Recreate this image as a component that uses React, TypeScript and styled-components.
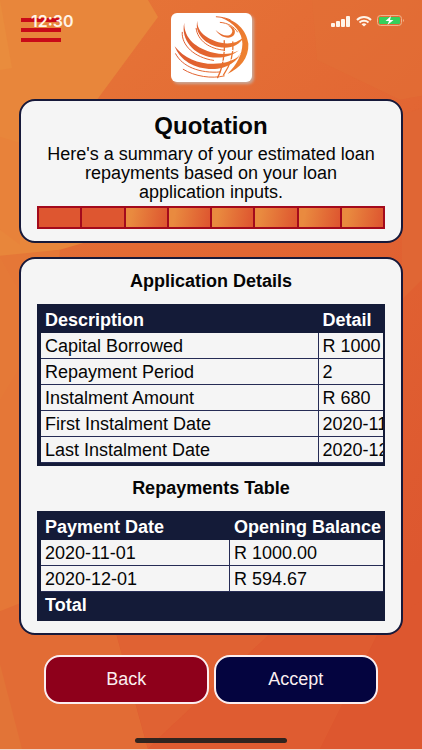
import React from "react";
import styled, { createGlobalStyle } from "styled-components";

const GlobalStyle = createGlobalStyle`
  * { box-sizing: border-box; }
  body {
    margin: 0;
    background: #e06534;
    font-family: "Liberation Sans", Arial, sans-serif;
    color: #050505;
  }
`;

const Screen = styled.div`
  position: relative;
  isolation: isolate;
  display: flex;
  flex-direction: column;
  min-height: 100vh;
  overflow: hidden;
  border-bottom: 1px solid #f3d5c8;
`;

const Backdrop = styled.svg`
  position: absolute;
  inset: 0;
  z-index: -1;
  width: 100%;
  height: 100%;
`;

const StatusBar = styled.div`
  position: absolute;
  top: 12px;
  left: 31px;
  right: 17px;
  display: flex;
  align-items: center;
  justify-content: space-between;
  height: 18px;
  color: #fff4e8;
  pointer-events: none;
`;

const Clock = styled.time`
  font-family: Inter, sans-serif;
  font-size: 16px;
  line-height: 18px;
  font-weight: 600;
`;

const StatusIcons = styled.div`
  display: flex;
  align-items: center;
  gap: 5px;
  svg { display: block; }
`;

const Header = styled.header`
  display: grid;
  grid-template-columns: 1fr auto 1fr;
  align-items: start;
  padding: 13px 20px 0;
`;

const MenuButton = styled.button`
  display: flex;
  flex-direction: column;
  gap: 6px;
  width: 42px;
  padding: 5px 1px;
  border: 0;
  background: none;
  cursor: pointer;
`;

const MenuLine = styled.span`
  height: 4px;
  width: 100%;
  background: #c90a18;
`;

const Logo = styled.div`
  width: 81px;
  height: 69px;
  border-radius: 6px;
  background: #fff;
  box-shadow: 2px 2px 3px #c9a99a;
  svg { display: block; width: 100%; height: 100%; }
`;

const Main = styled.main`
  display: flex;
  flex-direction: column;
  gap: 14px;
  padding: 17px 19px 0;
`;

const Card = styled.section`
  padding: 12px 16px;
  border: 2px solid #17193a;
  border-radius: 16px;
  background: #f5f5f5;
  text-align: center;
`;

const Title = styled.h1`
  margin: 0 0 6px;
  font-size: 24px;
  line-height: 26px;
`;

const Summary = styled.p`
  margin: 0 0 4px;
  font-size: 18px;
  line-height: 19px;
`;

const Steps = styled.ol`
  display: grid;
  grid-template-columns: repeat(8, 1fr);
  margin: 0;
  padding: 0 0 0 1px;
  list-style: none;
  border: 1px solid #a30a1c;
  border-right: 0;
  background: #a30a1c;
`;

const Step = styled.li<{ $done: boolean }>`
  height: 21px;
  border: solid #a30a1c;
  border-width: 1px 2px 1px 0;
  background: ${(p) => (p.$done ? "#de5630" : "linear-gradient(100deg, #e98a3f 15%, #de5730 95%)")};
`;

const SectionTitle = styled.h2`
  margin: 0;
  font-size: 18px;
  line-height: 20px;
`;

const TableFrame = styled.div`
  margin: 13px 0 12px;
  overflow-x: auto;
  scrollbar-width: none;
  border: 2px solid #141b38;
  &:last-child { margin-bottom: 0; }
`;

const Table = styled.table<{ $width: string; $first: string }>`
  width: ${(p) => p.$width};
  table-layout: fixed;
  border-collapse: separate;
  border-spacing: 0;
  border: solid #141b38;
  border-width: 1px 2px;
  font-size: 18px;
  line-height: 20px;
  text-align: left;
  white-space: nowrap;

  th:first-child, td:first-child { width: ${(p) => p.$first}; }
`;

const HeadCell = styled.th`
  height: 26px;
  padding: 0 4px;
  background: #141b38;
  color: #fff;
  & + & { border-left: 1px solid #141b38; }
`;

const Cell = styled.td`
  height: 26px;
  padding: 0 4px;
  border-bottom: 1px solid #262c55;
  & + & { border-left: 1px solid #262c55; }
`;

const Actions = styled.div`
  display: grid;
  grid-template-columns: 1fr 1fr;
  gap: 5px;
  padding: 20px 44px 0;
`;

const ActionButton = styled.button<{ $tone: string }>`
  height: 49px;
  border: 2px solid #fbeef0;
  border-radius: 16px;
  background: ${(p) => p.$tone};
  color: #fbeef0;
  font-family: inherit;
  font-size: 18px;
  cursor: pointer;
`;

const HomeIndicator = styled.div`
  width: 36%;
  height: 5px;
  margin: auto auto 6px;
  border-radius: 3px;
  background: #30241f;
`;

const details = [
  ["Capital Borrowed", "R 1000"],
  ["Repayment Period", "2"],
  ["Instalment Amount", "R 680"],
  ["First Instalment Date", "2020-11-01"],
  ["Last Instalment Date", "2020-12-01"],
];

const repayments = [
  ["2020-11-01", "R 1000.00"],
  ["2020-12-01", "R 594.67"],
];

function Facets() {
  return (
    <Backdrop viewBox="0 0 422 750" preserveAspectRatio="none" aria-hidden="true">
      <defs>
        <linearGradient id="base" x1="0" y1="0" x2="0.5" y2="1">
          <stop offset="0" stopColor="#e77838" />
          <stop offset="0.5" stopColor="#e26633" />
          <stop offset="1" stopColor="#dd572f" />
        </linearGradient>
      </defs>
      <rect width="422" height="750" fill="url(#base)" />
      <path d="M0 0H148L158 17L97 100L60 180L84 243L60 250L0 260Z" fill="#e8863b" />
      <path d="M0 0L12 68L0 70Z" fill="#e98c3d" />
      <path d="M0 137L20 143V245L0 230Z" fill="#e8823a" />
      <path d="M0 256L60 250L40 450L20 610L0 612Z" fill="#e57737" />
      <path d="M0 258L24 300V360L0 400Z" fill="#e67b38" opacity=".7" />
      <path d="M0 612L30 600L115 630L148 750H0Z" fill="#e26c35" />
      <path d="M0 665L22 750H0Z" fill="#e27437" />
      <path d="M115 630H275L160 738L148 750Z" fill="#e06233" />
      <path d="M275 630L160 738L148 750H320L380 630Z" fill="#df5c31" />
      <path d="M380 630L320 750H422V600Z" fill="#dd572f" />
      <path d="M402 115L422 108V280L402 300Z" fill="#e06634" />
      <path d="M312 0L317 60L400 100L422 96V0Z" fill="#e27036" opacity=".5" />
    </Backdrop>
  );
}

function GlobeLogo() {
  return (
    <Logo>
      <svg viewBox="31 38 245 206" role="img" aria-label="Globe logo">
        <defs>
          <linearGradient id="globe" gradientUnits="userSpaceOnUse" x1="42" y1="110" x2="265" y2="150">
            <stop offset="0" stopColor="#dc5930" />
            <stop offset="0.6" stopColor="#e5692f" />
            <stop offset="1" stopColor="#ef8430" />
          </linearGradient>
        </defs>
        <g fill="url(#globe)">
          <path d="M42 137C60 184 112 211 172 205C214 199 243 173 254 134C249 160 226 181 183 189C128 196 74 178 42 137Z" />
          <path d="M71 66C60 117 99 164 158 171C188 174 216 166 236 150C214 161 189 164 160 157C108 144 70 114 71 66Z" />
          <path d="M111 60C100 98 137 136 185 141C214 144 239 132 252 109C232 126 211 132 183 127C141 117 108 93 111 60Z" />
          <path d="M166 88C177 107 206 120 221 104C230 92 221 77 202 74C215 82 221 92 213 100C202 111 180 102 166 88Z" />
          <path d="M182 50C226 55 260 87 265 130C267 174 239 204 202 221C231 192 246 163 247 130C247 96 222 66 182 50Z" />
        </g>
        <g fill="none" stroke="url(#globe)" strokeLinecap="round">
          <g strokeWidth="3">
            <path d="M45 160C65 199 118 220 180 215" />
            <path d="M65 95C62 134 102 172 160 180" />
            <path d="M107 83C111 120 148 146 192 149" />
            <path d="M68 207C104 229 153 236 192 227" />
            <path d="M168 48C184 49 198 52 210 57" />
            <path d="M180 65C204 67 222 78 232 94" />
          </g>
          <g strokeWidth="4">
            <path d="M192 120C195 155 188 201 172 232" />
            <path d="M218 124C221 155 213 190 190 224" />
          </g>
        </g>
        <path d="M180 153C206 155 227 150 243 138M176 183C204 183 227 176 241 162" fill="none" stroke="#fff" strokeWidth="3" />
      </svg>
    </Logo>
  );
}

function DeviceStatus() {
  return (
    <StatusBar>
      <Clock>12:30</Clock>
      <StatusIcons>
        <svg width="20" height="11" viewBox="0 0 20 11" fill="currentColor" aria-hidden="true">
          <rect x="0" y="7" width="4" height="4" rx="1" />
          <rect x="5" y="5" width="4" height="6" rx="1" />
          <rect x="10" y="3" width="4" height="8" rx="1" />
          <rect x="15" y="0" width="4" height="11" rx="1" />
        </svg>
        <svg width="16" height="11" viewBox="0 0 16 11" fill="none" stroke="currentColor" strokeWidth="2" aria-hidden="true">
          <path d="M1 4C5 0 11 0 15 4M3.500 6.500C6 4.200 10 4.200 12.500 6.500" />
          <path d="M5.500 8.200Q8 6.300 10.500 8.200L8 10.500Z" fill="currentColor" stroke="none" />
        </svg>
        <svg width="28" height="12" viewBox="0 0 28 12" aria-hidden="true">
          <rect x="0.500" y="0.500" width="24" height="10" rx="3" fill="none" stroke="#efb48c" />
          <rect x="2" y="2" width="21" height="7" rx="1" fill="#35cf5b" />
          <path d="M26 4Q28 5.500 26 7Z" fill="#efb48c" />
          <path d="M14 1L8.500 6H12L10.500 10L16.500 5H13Z" fill="#fff" />
        </svg>
      </StatusIcons>
    </StatusBar>
  );
}

type DataTableProps = {
  label: string;
  head: string[];
  rows: string[][];
  width: string;
  first: string;
  footer?: string;
};

function DataTable({ label, head, rows, width, first, footer }: DataTableProps) {
  return (
    <TableFrame>
      <Table aria-label={label} $width={width} $first={first}>
        <thead>
          <tr>{head.map((h) => <HeadCell key={h} scope="col">{h}</HeadCell>)}</tr>
        </thead>
        <tbody>
          {rows.map((row) => (
            <tr key={row[0]}>{row.map((value) => <Cell key={value}>{value}</Cell>)}</tr>
          ))}
        </tbody>
        {footer && (
          <tfoot>
            <tr><HeadCell scope="row" colSpan={2}>{footer}</HeadCell></tr>
          </tfoot>
        )}
      </Table>
    </TableFrame>
  );
}

export default function App() {
  return (
    <>
      <GlobalStyle />
      <Screen>
        <Facets />
        <Header>
          <MenuButton aria-label="Menu">
            <MenuLine />
            <MenuLine />
            <MenuLine />
          </MenuButton>
          <GlobeLogo />
        </Header>
        <DeviceStatus />
        <Main>
          <Card>
            <Title>Quotation</Title>
            <Summary>
              Here's a summary of your estimated loan<br />
              repayments based on your loan<br />
              application inputs.
            </Summary>
            <Steps aria-label="Progress">
              {Array.from({ length: 8 }, (_, i) => <Step key={i} $done={i < 2} />)}
            </Steps>
          </Card>
          <Card>
            <SectionTitle>Application Details</SectionTitle>
            <DataTable
              label="Application Details"
              head={["Description", "Detail"]}
              rows={details}
              width="116%"
              first="70%"
            />
            <SectionTitle>Repayments Table</SectionTitle>
            <DataTable
              label="Repayments Table"
              head={["Payment Date", "Opening Balance"]}
              rows={repayments}
              width="120%"
              first="46%"
              footer="Total"
            />
          </Card>
        </Main>
        <Actions>
          <ActionButton $tone="#8e001b">Back</ActionButton>
          <ActionButton $tone="#04043f">Accept</ActionButton>
        </Actions>
        <HomeIndicator />
      </Screen>
    </>
  );
}
